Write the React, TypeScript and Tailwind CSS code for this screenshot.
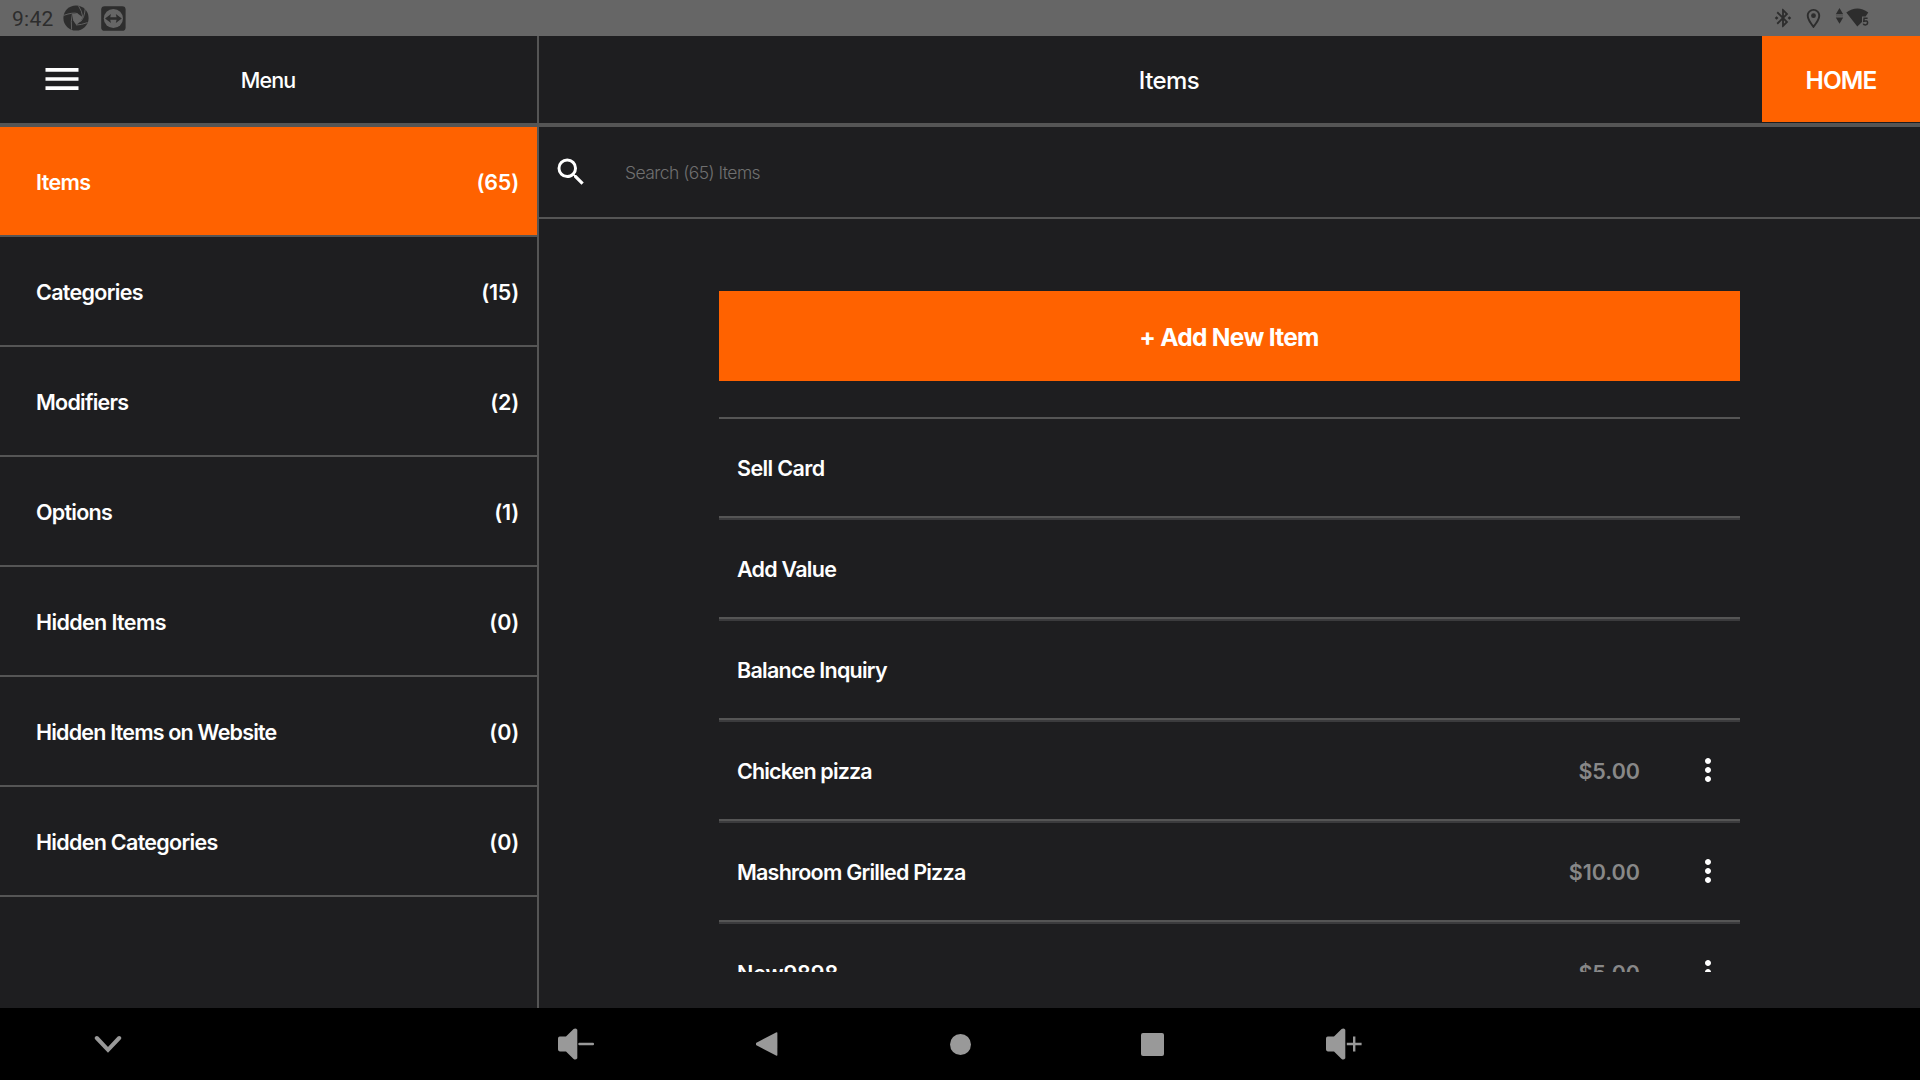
import React from "react";
import { MdBluetoothConnected, MdMenu, MdMoreVert, MdOutlineLocationOn, MdSearch } from "react-icons/md";

const sections = [
  { name: "Items", count: 65, tracking: "tracking-[-0.6px]", active: true },
  { name: "Categories", count: 15, tracking: "tracking-[-0.69px]" },
  { name: "Modifiers", count: 2, tracking: "tracking-[-0.75px]" },
  { name: "Options", count: 1, tracking: "tracking-[-0.75px]" },
  { name: "Hidden Items", count: 0, tracking: "tracking-[-0.62px]" },
  { name: "Hidden Items on Website", count: 0, tracking: "tracking-[-0.8px]" },
  { name: "Hidden Categories", count: 0, tracking: "tracking-[-0.7px]" },
];

const items = [
  { name: "Sell Card", tracking: "tracking-[-0.6px]" },
  { name: "Add Value", tracking: "tracking-[-0.75px]" },
  { name: "Balance Inquiry", tracking: "tracking-[-0.75px]" },
  { name: "Chicken pizza", price: "$5.00", tracking: "tracking-[-0.86px]" },
  { name: "Mashroom Grilled Pizza", price: "$10.00", tracking: "tracking-[-0.78px]" },
  { name: "New9898", price: "$5.00", tracking: "tracking-[-0.1px]" },
];

function ApertureIcon() {
  return (
    <svg width="26" height="26" viewBox="0 0 26 26">
      <circle cx="13" cy="13" r="12.6" fill="#2d2d2d" />
      <path d="M9.4 8.9 L14.6 8.6 L19.8 12.2 L17.6 16.6 L13.2 20 L10.2 15.6 Z" fill="#666" />
      <g stroke="#666" strokeWidth="0.9" fill="none">
        <path d="M14.6 8.6 Q10 7 0.6 10.4" />
        <path d="M19.8 12.2 Q19 6 15.5 0.8" />
        <path d="M17.6 16.6 Q21.5 12.5 22.2 4" />
        <path d="M13.2 20 Q18 20 24.5 17.6" />
        <path d="M9.4 8.9 Q7.6 16 8.6 24.6" />
      </g>
    </svg>
  );
}

function RemoteIcon() {
  return (
    <svg width="25" height="25" viewBox="0 0 25 25">
      <rect x="0.2" y="0.2" width="24.4" height="24.6" rx="3.4" fill="#2d2d2d" />
      <circle cx="12.4" cy="12.5" r="9.6" fill="#666" />
      <path d="M4 12.5 L10 8 L9.2 11.3 H15.6 L14.8 8 L20.8 12.5 L14.8 17 L15.6 13.7 H9.2 L10 17 Z" fill="#2d2d2d" />
    </svg>
  );
}

function WifiIcon() {
  return (
    <svg width="34" height="22" viewBox="0 0 34 22">
      <path d="M4.5 1 L8.2 7.2 H0.8 Z M4.5 16.8 L0.8 10.6 H8.2 Z" fill="#2d2d2d" />
      <path d="M1 8.9 H8" stroke="#4a4a4a" strokeWidth="0.8" />
      <path d="M11.3 5.4 Q22.3 -2.6 33.3 5.4 L30.6 9.4 H27 V15 L22.3 19.4 Z" fill="#2d2d2d" />
      <path d="M32.6 11.3 H29.1 L28.8 14.3 Q32.6 13.2 32.6 15.6 Q32.6 17.9 30.4 17.9 Q28.6 17.9 28.3 16.6" fill="none" stroke="#2d2d2d" strokeWidth="1.5" />
    </svg>
  );
}

function VolumeIcon({ up = false }: { up?: boolean }) {
  return (
    <svg width="36" height="32" viewBox="0 0 36 32" fill="#999">
      <path d="M1.8 8.6 H8 L15.6 1 Q17.8 -0.4 19.3 1.8 V30.2 Q17.8 32.4 15.6 31 L8 23.4 H1.8 Q0 23.4 0 21.6 V10.4 Q0 8.6 1.8 8.6 Z" />
      {up ? (
        <path d="M20.8 14.8 H27 V8.6 H29.4 V14.8 H35.6 V17.2 H29.4 V23.4 H27 V17.2 H20.8 Z" />
      ) : (
        <rect x="20.3" y="14.7" width="15.7" height="2.6" rx="1" />
      )}
    </svg>
  );
}

function StatusBar() {
  return (
    <div className="flex h-9 shrink-0 items-center bg-[#666] text-[#2d2d2d]">
      <span className="w-[51px] pl-3 pt-px font-[Roboto,sans-serif] text-[21px] leading-9 tracking-[0.25px]">9:42</span>
      <div className="ml-3 flex items-center gap-3">
        <ApertureIcon />
        <RemoteIcon />
      </div>
      <div className="ml-auto flex items-center pr-[51px]">
        <MdBluetoothConnected size={22} />
        <MdOutlineLocationOn size={23} className="ml-2 mr-px" />
        <span className="ml-[9px] -mt-px">
          <WifiIcon />
        </span>
      </div>
    </div>
  );
}

function Sidebar() {
  return (
    <aside className="flex w-[539px] shrink-0 flex-col border-r-2 border-[#555]">
      <header className="flex h-[91px] items-center border-b-4 border-[#555]">
        <div className="w-[150px] pb-px pl-10">
          <MdMenu size={44} />
        </div>
        <h2 className="w-[236px] pt-0.5 text-center text-[21.5px] font-medium tracking-[-0.87px]">Menu</h2>
      </header>
      <nav>
        {sections.map((s) => (
          <div
            key={s.name}
            className={
              s.active
                ? "flex h-[110px] items-center justify-between border-b-2 border-[#555] bg-[#ff6200] pt-[3px] pr-[18px] pl-9"
                : "flex h-[110px] items-center justify-between border-b-2 border-[#555] pt-[3px] pr-[18px] pl-9"
            }
          >
            <span className={`text-[21.5px] font-semibold ${s.tracking}`}>{s.name}</span>
            <span className="text-[21.5px] font-semibold tracking-[-0.2px]">({s.count})</span>
          </div>
        ))}
      </nav>
    </aside>
  );
}

function ItemList() {
  return (
    <div className="mx-[180px] mt-[72px] flex h-[681px] flex-col overflow-hidden">
      <button className="mb-9 h-[90px] shrink-0 bg-[#ff6200] pt-0.5 pr-px text-[24.5px] font-bold tracking-[-0.7px]">
        + Add New Item
      </button>
      <div className="shrink-0 border-t-2 border-[#555]">
        {items.map((item) => (
          <div key={item.name} className="border-b-2 border-[#3b3b3d]">
            <div className="flex h-[99px] items-center border-b-2 border-[#555] pl-[18px]">
              <span className={`grow pt-0.5 text-[21.5px] font-semibold ${item.tracking}`}>{item.name}</span>
              {item.price && (
                <>
                  <span className="pt-0.5 text-[21.5px] font-semibold text-[#888]">{item.price}</span>
                  <MdMoreVert size={36} className="mr-[14px] mb-px ml-[50px]" />
                </>
              )}
            </div>
          </div>
        ))}
      </div>
    </div>
  );
}

function NavBar() {
  const cell = "flex w-48 justify-center";
  return (
    <footer className="flex h-[72px] shrink-0 items-center bg-black">
      <div className="mr-[264px] flex w-[216px] justify-center">
        <svg width="28" height="18" viewBox="0 0 28 18">
          <path d="M2.8 3 L14 14.8 L25.2 3" fill="none" stroke="#999" strokeWidth="4" strokeLinecap="round" strokeLinejoin="miter" />
        </svg>
      </div>
      <div className={cell}>
        <VolumeIcon />
      </div>
      <div className={cell}>
        <svg width="24" height="24" viewBox="0 0 24 24">
          <path d="M0.4 10.8 L20 0.4 Q21.4 -0.2 21.4 1 V23 Q21.4 24.2 20 23.6 L0.4 13.2 Q-1 12 0.4 10.8 Z" fill="#999" />
        </svg>
      </div>
      <div className={cell}>
        <div className="size-[21px] rounded-full bg-[#999]" />
      </div>
      <div className={cell}>
        <div className="size-[23px] rounded-[2px] bg-[#999]" />
      </div>
      <div className={cell}>
        <VolumeIcon up />
      </div>
    </footer>
  );
}

export default function App() {
  return (
    <div className="flex h-[1080px] w-[1920px] flex-col overflow-hidden bg-[#1e1e20] font-[Inter,sans-serif] text-white">
      <StatusBar />
      <div className="flex h-[972px] shrink-0">
        <Sidebar />
        <main className="flex grow flex-col">
          <header className="flex h-[91px] shrink-0 items-start border-b-4 border-[#555]">
            <h1 className="grow pt-0.5 pl-[37px] text-center text-[24px] leading-[86px] font-medium tracking-[-0.56px]">Items</h1>
            <button className="h-[86px] w-[158px] bg-[#ff6200] pt-0.5 text-[24.5px] font-semibold tracking-[-0.9px]">HOME</button>
          </header>
          <div className="flex h-[92px] shrink-0 items-center border-b-2 border-[#555]">
            <MdSearch size={36} className="ml-3.5" />
            <input
              className="ml-9 w-[500px] bg-transparent pt-0.5 text-[17.5px] font-light tracking-[-0.55px] outline-none placeholder:text-[#707070]"
              placeholder="Search (65) Items"
            />
          </div>
          <ItemList />
        </main>
      </div>
      <NavBar />
    </div>
  );
}
